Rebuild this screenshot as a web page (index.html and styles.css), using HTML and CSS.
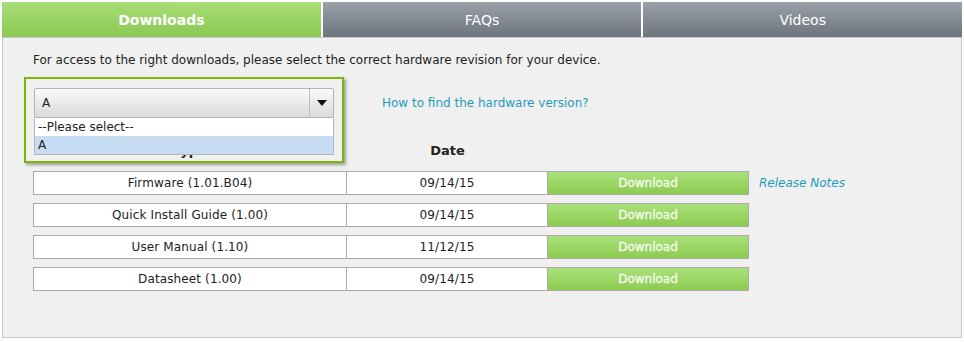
FILE: index.html
```html
<!DOCTYPE html>
<html>
<head>
<meta charset="utf-8">
<link rel="stylesheet" href="styles.css">
</head>
<body>
<div class="tabs">
  <div class="tab tab-active">Downloads</div>
  <div class="tab">FAQs</div>
  <div class="tab">Videos</div>
</div>
<div class="panel">
  <p class="intro">For access to the right downloads, please select the correct hardware revision for your device.</p>
  <div class="select-row">
    <div class="picker">
      <div class="frame"></div>
      <div class="select">
        <span class="select-value">A</span>
        <span class="select-arrow"><svg width="10" height="6" viewBox="0 0 10 6"><path d="M0 0H10L5 6Z" fill="#111"/></svg></span>
      </div>
      <ul class="options">
        <li class="option">--Please select--</li>
        <li class="option option-selected">A</li>
      </ul>
    </div>
    <a class="link" href="#">How to find the hardware version?</a>
  </div>
  <div class="head-row">
    <div class="col-type">Type</div>
    <div class="col-date">Date</div>
  </div>
  <div class="rows">
    <div class="row">
      <div class="cell cell-type">Firmware (1.01.B04)</div>
      <div class="cell cell-date">09/14/15</div>
      <div class="cell btn">Download</div>
      <a class="notes" href="#">Release Notes</a>
    </div>
    <div class="row">
      <div class="cell cell-type">Quick Install Guide (1.00)</div>
      <div class="cell cell-date">09/14/15</div>
      <div class="cell btn">Download</div>
    </div>
    <div class="row">
      <div class="cell cell-type">User Manual (1.10)</div>
      <div class="cell cell-date">11/12/15</div>
      <div class="cell btn">Download</div>
    </div>
    <div class="row">
      <div class="cell cell-type">Datasheet (1.00)</div>
      <div class="cell cell-date">09/14/15</div>
      <div class="cell btn">Download</div>
    </div>
  </div>
</div>
</body>
</html>
```
FILE: styles.css
```css
html, body {
  background: #ffffff;
}
body {
  margin: 2px 2px 0 2px;
  width: 960px;
  font-family: "DejaVu Sans", Verdana, sans-serif;
  font-size: 12px;
  color: #222;
}
.tabs {
  display: flex;
  gap: 2px;
  height: 35px;
}
.tab {
  flex: 1;
  display: flex;
  align-items: center;
  justify-content: center;
  color: #fff;
  font-size: 14px;
  background: linear-gradient(#9ba1ab, #6e747c);
}
.tab-active {
  font-weight: bold;
  background: linear-gradient(#a8de78, #8bc852);
}
.panel {
  background: #f0f0f0;
  border: 1px solid #c8c8c8;
  box-sizing: border-box;
  height: 301px;
  padding: 14px 0 0 30px;
}
.intro {
  margin: 0;
  line-height: 16px;
}
.select-row {
  display: flex;
  align-items: center;
  margin-top: 20px;
  padding-left: 1px;
}
.picker {
  position: relative;
  width: 300px;
  height: 30px;
}
.frame {
  position: absolute;
  left: -10px;
  top: -11px;
  width: 320px;
  height: 86px;
  box-sizing: border-box;
  border: 2px solid #7cb800;
  box-shadow: 2px 2px 3px rgba(0,0,0,0.35);
  z-index: 1;
}
.select {
  position: relative;
  z-index: 2;
  box-sizing: border-box;
  height: 30px;
  border: 1px solid #b4b4b4;
  border-radius: 2px;
  background: linear-gradient(#fafafa, #dadada);
  display: flex;
  align-items: center;
}
.select-value {
  flex: 1;
  padding-left: 7px;
}
.select-arrow {
  width: 23px;
  height: 28px;
  border-left: 1px solid #bdbdbd;
  display: flex;
  align-items: center;
  justify-content: center;
}
.options {
  position: absolute;
  z-index: 3;
  left: 0;
  top: 30px;
  width: 300px;
  box-sizing: border-box;
  margin: 0;
  padding: 0;
  list-style: none;
  background: #fff;
  border: 1px solid #b4b4b4;
  border-top: none;
}
.option {
  height: 18px;
  line-height: 18px;
  padding-left: 3px;
}
.option-selected {
  background: #c6dcf2;
}
.link {
  margin-left: 48px;
  color: #1e9cbb;
  text-decoration: none;
}
.head-row {
  display: flex;
  margin-top: 23px;
  height: 20px;
  line-height: 20px;
  font-weight: bold;
  font-size: 13px;
}
.col-type {
  width: 314px;
  text-align: center;
}
.col-date {
  width: 201px;
  text-align: center;
}
.rows {
  margin-top: 10px;
  display: flex;
  flex-direction: column;
  gap: 8px;
}
.row {
  display: flex;
  align-items: center;
  height: 24px;
}
.cell {
  box-sizing: border-box;
  height: 24px;
  line-height: 22px;
  text-align: center;
  border: 1px solid #aaaaaa;
  background: #fff;
  letter-spacing: 0.12px;
}
.cell-type {
  width: 314px;
}
.cell-date {
  width: 201px;
  border-left: none;
}
.btn {
  width: 201px;
  border-left: none;
  color: #f6faf0;
  -webkit-text-stroke: 0.3px #f6faf0;
  letter-spacing: 0;
  background: linear-gradient(#aae27a, #8ccb50);
}
.notes {
  margin-left: 10px;
  color: #1e9cbb;
  font-style: italic;
  text-decoration: none;
}
```
